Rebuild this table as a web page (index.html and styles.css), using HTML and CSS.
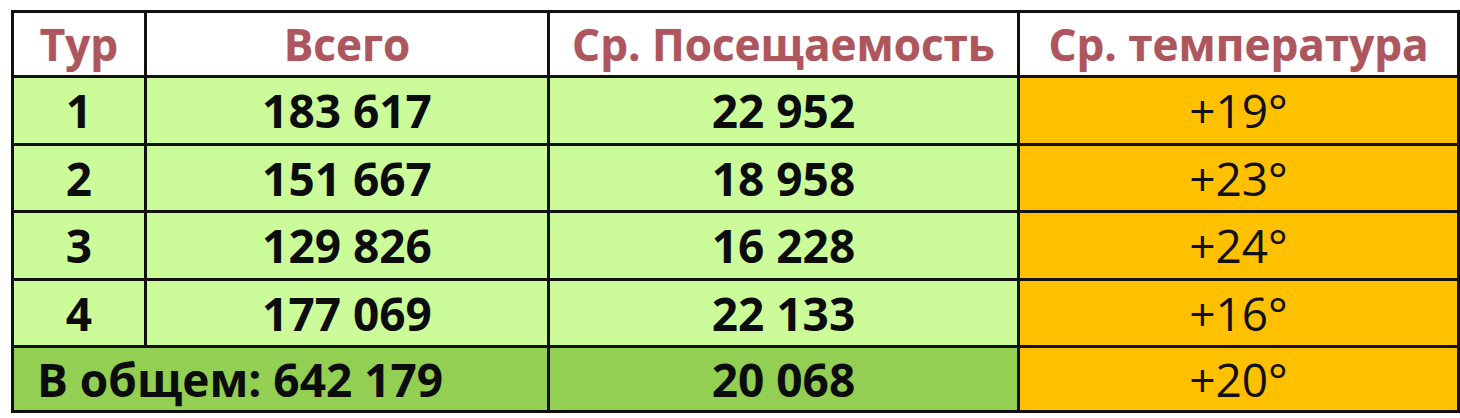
FILE: index.html
```html
<!DOCTYPE html>
<html lang="ru">
<head>
<meta charset="utf-8">
<title>Туры</title>
<link rel="stylesheet" href="styles.css">
</head>
<body>
<div class="wrap">
<table class="stats">
  <colgroup>
    <col class="c1"><col class="c2"><col class="c3"><col class="c4">
  </colgroup>
  <thead>
    <tr class="head">
      <th>Тур</th><th>Всего</th><th>Ср. Посещаемость</th><th>Ср. температура</th>
    </tr>
  </thead>
  <tbody>
    <tr class="row"><td>1</td><td>183 617</td><td>22 952</td><td class="temp">+19°</td></tr>
    <tr class="row"><td>2</td><td>151 667</td><td>18 958</td><td class="temp">+23°</td></tr>
    <tr class="row"><td>3</td><td>129 826</td><td>16 228</td><td class="temp">+24°</td></tr>
    <tr class="row"><td>4</td><td>177 069</td><td>22 133</td><td class="temp">+16°</td></tr>
    <tr class="total"><td colspan="2" class="lead">В общем: 642 179</td><td>20 068</td><td class="temp">+20°</td></tr>
  </tbody>
</table>
</div>
</body>
</html>
```
FILE: styles.css
```css
html, body {
  margin: 0;
  padding: 0;
  background: #ffffff;
}
.wrap {
  padding: 10px 0 0 11px;
}
.stats {
  border-collapse: collapse;
  table-layout: fixed;
  width: 1446px;
  font-family: "Open Sans", "Liberation Sans", sans-serif;
  font-size: 46px;
  font-weight: 700;
  color: #0c0c0c;
}
.c1 { width: 133px; }
.c2 { width: 403px; }
.c3 { width: 470px; }
.c4 { width: 440px; }
.stats th, .stats td {
  border: 3px solid #111111;
  text-align: center;
  padding: 0;
  line-height: 1;
  white-space: nowrap;
}
.head th {
  height: 62px;
  background: #ffffff;
  color: #ad565d;
  font-size: 44px;
  font-weight: 700;
  text-shadow: 0 0 1px rgba(173, 86, 93, 0.5);
}
.row td {
  height: 64.5px;
  background: #ccfc9a;
}
.total td {
  height: 62px;
  background: #92cf52;
}
.stats td.temp {
  background: #ffc000;
  font-weight: 400;
  color: #111111;
}
.total td.lead {
  text-align: left;
  padding-left: 23px;
}
```
